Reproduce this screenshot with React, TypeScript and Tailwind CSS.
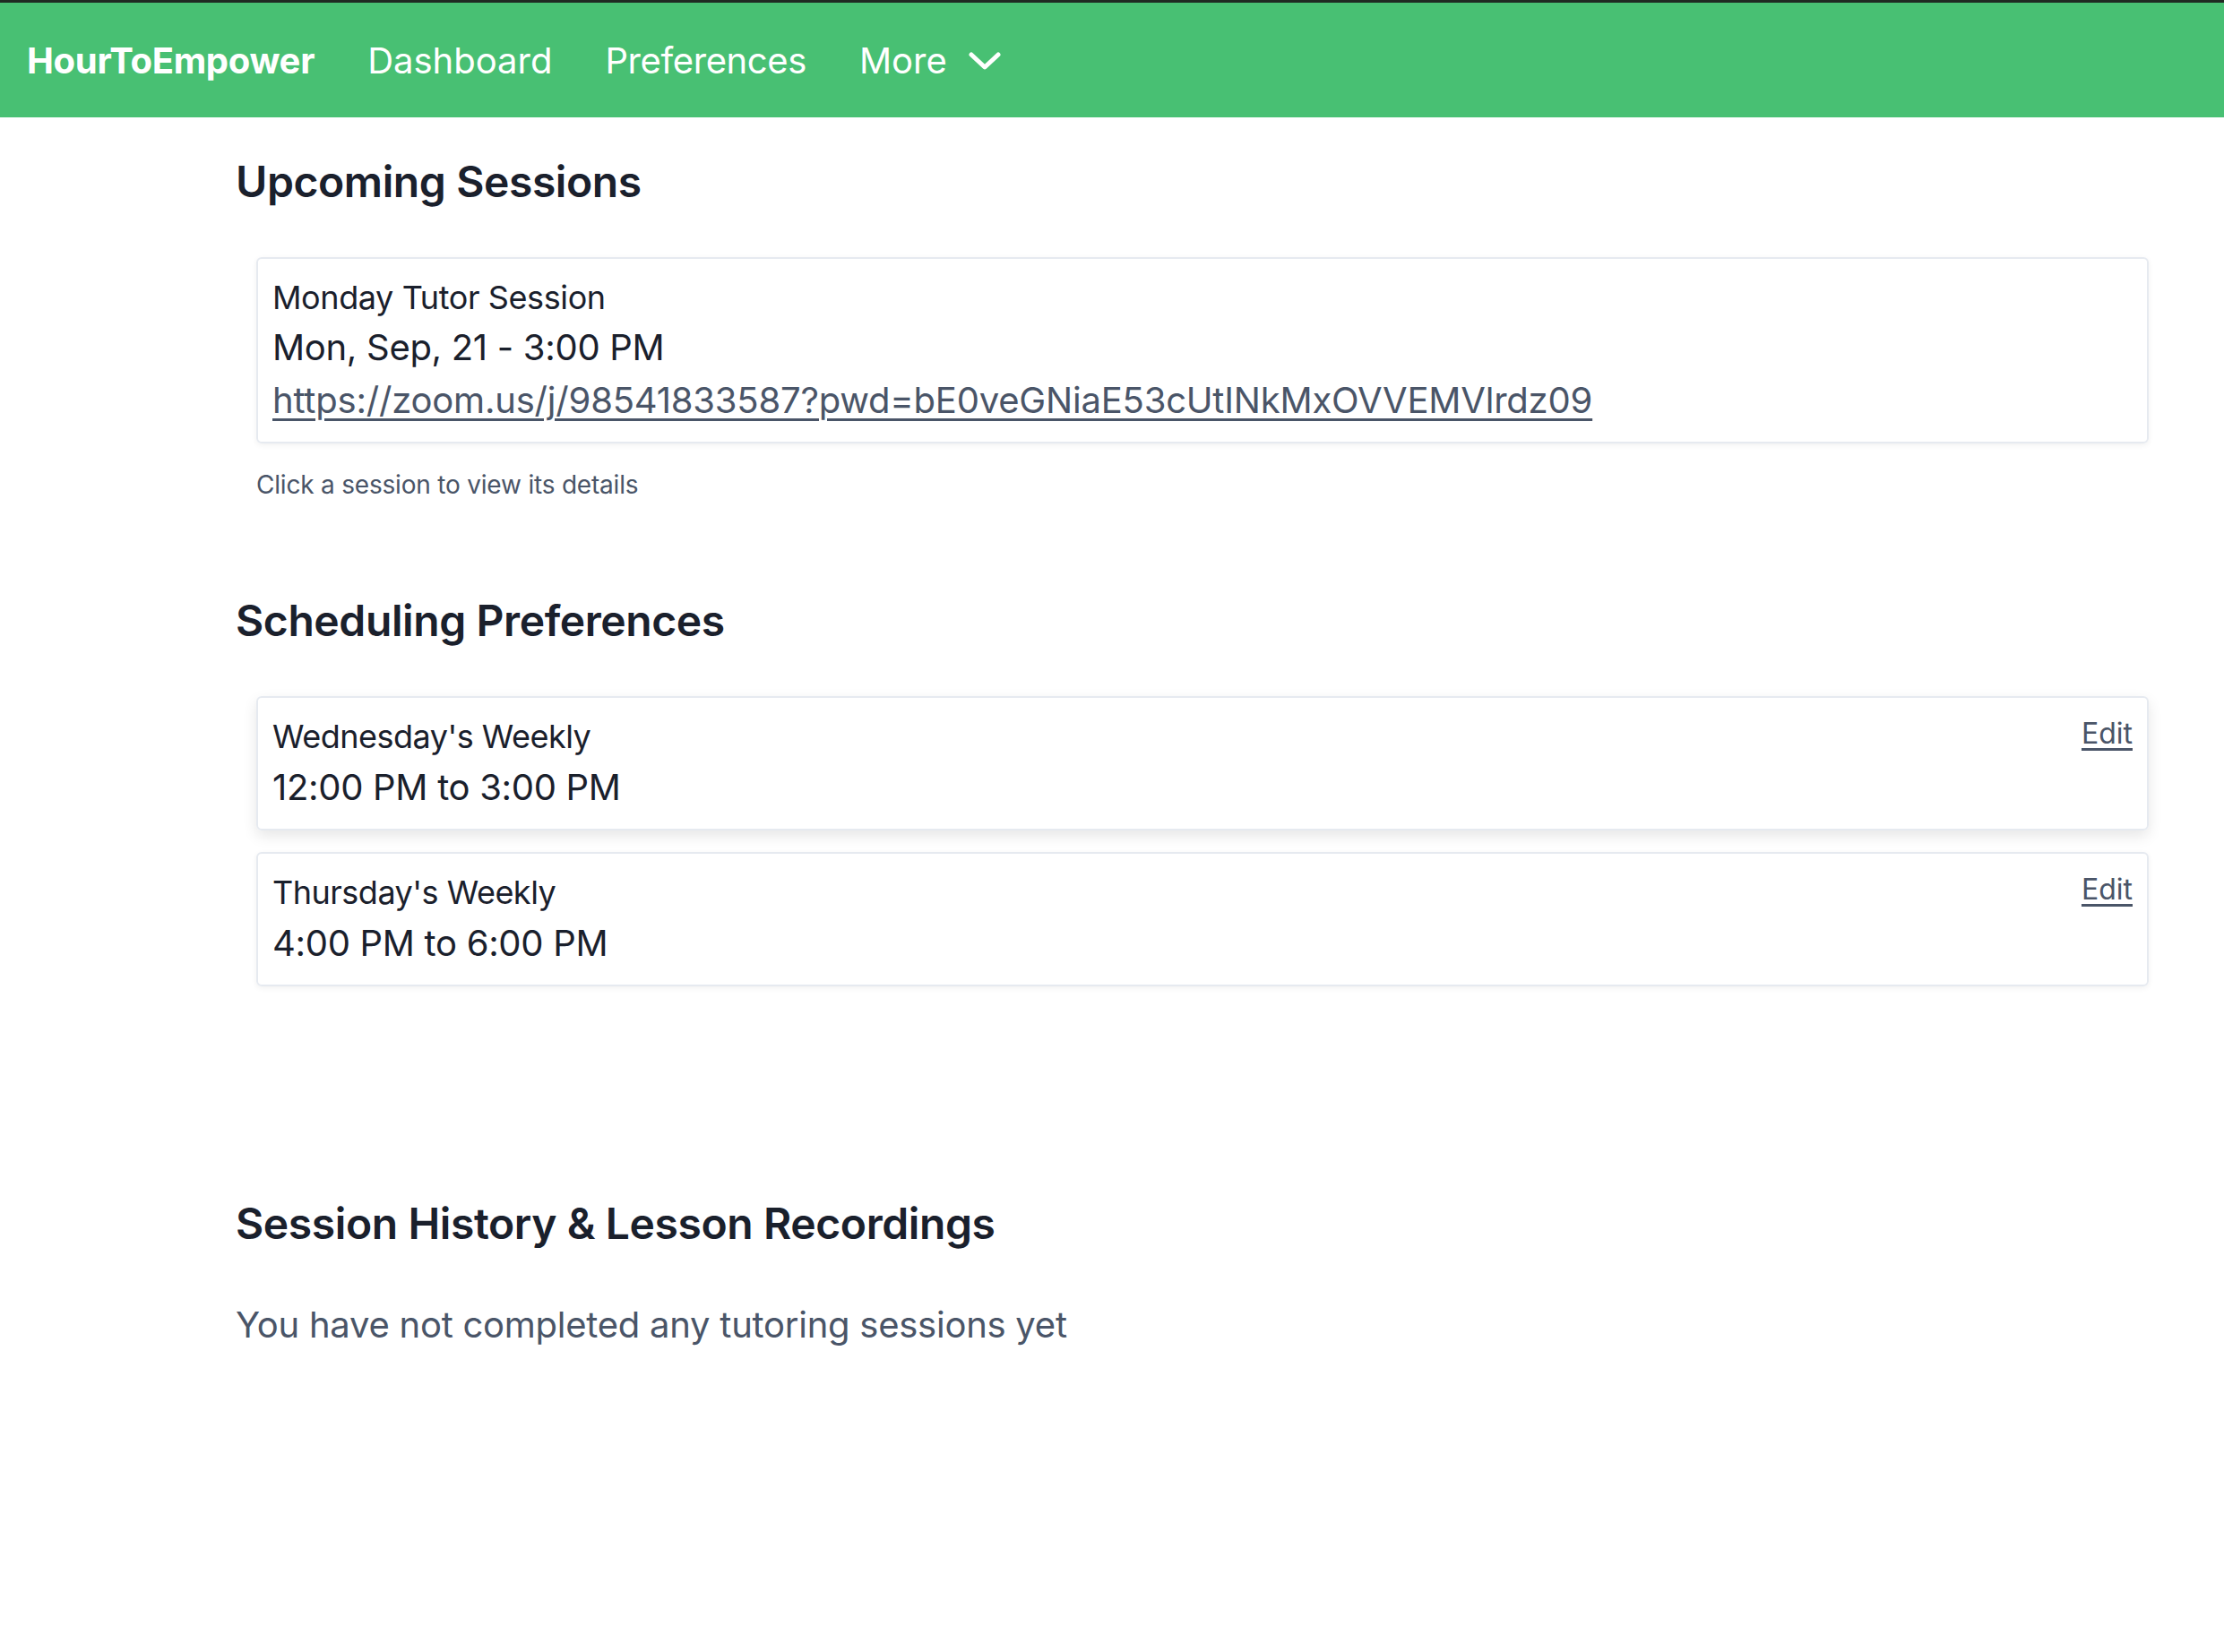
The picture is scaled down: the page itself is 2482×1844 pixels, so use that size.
import React from "react";

const FONT = "font-['Inter','Noto_Sans',sans-serif]";

interface Preference {
  title: string;
  time: string;
  raised?: boolean;
}

const preferences: Preference[] = [
  { title: "Wednesday's Weekly", time: "12:00 PM to 3:00 PM", raised: true },
  { title: "Thursday's Weekly", time: "4:00 PM to 6:00 PM" },
];

function Chevron() {
  return (
    <svg width="36" height="22" viewBox="0 0 36 22" fill="none">
      <polyline
        points="3,4 18,18 33,4"
        stroke="white"
        strokeWidth="5"
        strokeLinecap="round"
        strokeLinejoin="round"
      />
    </svg>
  );
}

function NavBar() {
  return (
    <nav className="flex h-[131px] items-center gap-[59px] border-t-[3px] border-[#1f2a22] bg-[#48c073] pl-[30px] pt-[2px] text-[40px] leading-none text-white">
      <span className="font-bold tracking-[-0.3px]">HourToEmpower</span>
      <span>Dashboard</span>
      <span className="tracking-[-0.4px]">Preferences</span>
      <span className="flex items-center gap-[24px]">
        More
        <Chevron />
      </span>
    </nav>
  );
}

function SectionTitle({ children }: { children: React.ReactNode }) {
  return (
    <h2 className="text-[48px] font-semibold leading-[58px] tracking-[-0.4px] text-[#1a202c]">
      {children}
    </h2>
  );
}

export default function App() {
  return (
    <div className={`min-h-screen bg-white ${FONT}`}>
      <NavBar />

      <main className="pl-[263px] pr-[84px] pt-[43px]">
        {/* Upcoming sessions */}
        <SectionTitle>Upcoming Sessions</SectionTitle>
        <div className="ml-[23px] mt-[55px] rounded-[6px] border-2 border-[#e6eaf0] p-[16px] text-[#1a202c] shadow-[0_2px_6px_rgba(0,0,0,0.06)]">
          <div className="text-[36px] leading-[54px] tracking-[-0.4px]">Monday Tutor Session</div>
          <div className="text-[40px] leading-[58px] tracking-[-0.3px]">Mon, Sep, 21 - 3:00 PM</div>
          <a
            href="#"
            className="block text-[40px] leading-[60px] tracking-[-0.2px] text-[#4a5568] underline decoration-[3px] underline-offset-[6px]"
          >
            https://zoom.us/j/98541833587?pwd=bE0veGNiaE53cUtINkMxOVVEMVlrdz09
          </a>
        </div>
        <p className="ml-[23px] mt-[25px] text-[28px] leading-[42px] tracking-[-0.2px] text-[#4a5568]">
          Click a session to view its details
        </p>

        {/* Scheduling preferences */}
        <div className="mt-[102px]">
          <SectionTitle>Scheduling Preferences</SectionTitle>
        </div>
        <div className="ml-[23px] mt-[55px] flex flex-col gap-[24px]">
          {preferences.map((p) => (
            <div
              key={p.title}
              className={`flex items-start justify-between rounded-[6px] border-2 border-[#e6eaf0] p-[16px] text-[#1a202c] ${
                p.raised
                  ? "shadow-[0_6px_16px_rgba(0,0,0,0.10)]"
                  : "shadow-[0_2px_6px_rgba(0,0,0,0.06)]"
              }`}
            >
              <div>
                <div className="text-[36px] leading-[54px] tracking-[-0.5px]">{p.title}</div>
                <div className="text-[40px] leading-[60px] tracking-[-0.3px]">{p.time}</div>
              </div>
              <a
                href="#"
                className="text-[32px] leading-[48px] text-[#4a5568] underline decoration-[3px] underline-offset-[5px]"
              >
                Edit
              </a>
            </div>
          ))}
        </div>

        {/* Session history */}
        <div className="mt-[236px]">
          <SectionTitle>Session History &amp; Lesson Recordings</SectionTitle>
        </div>
        <p className="mt-[55px] text-[40px] leading-[58px] tracking-[-0.25px] text-[#4a5568]">
          You have not completed any tutoring sessions yet
        </p>
      </main>
    </div>
  );
}
